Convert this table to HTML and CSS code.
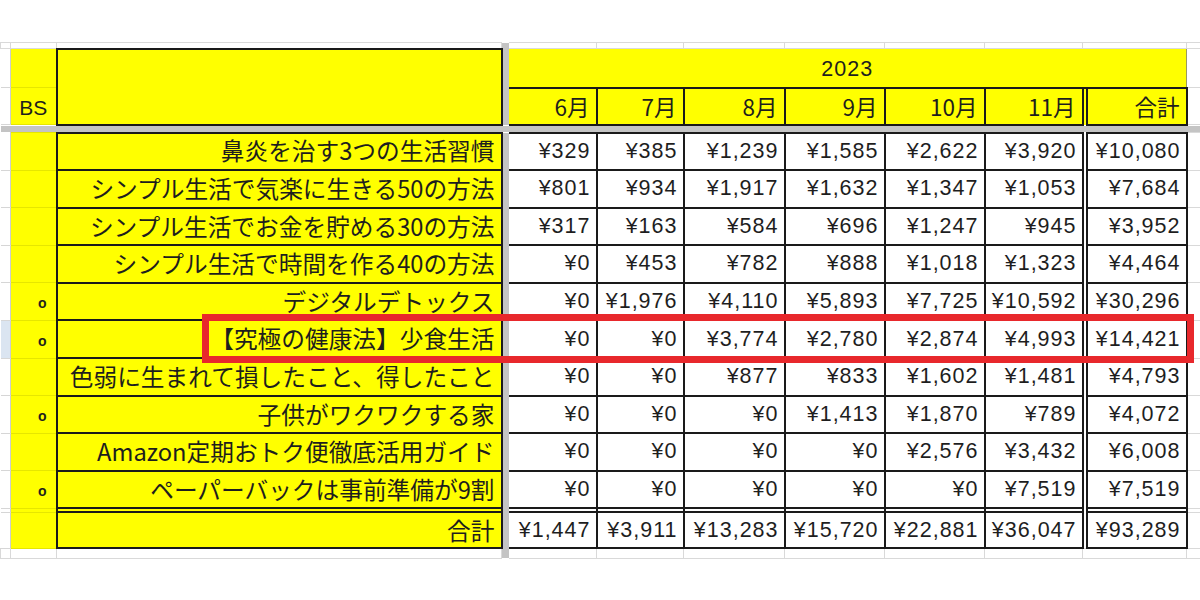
FILE: index.html
```html
<!DOCTYPE html>
<html lang="ja">
<head>
<meta charset="utf-8">
<title>2023 売上表</title>
<link rel="stylesheet" href="styles.css">
</head>
<body>
<div class="sheet">
<table class="grid">
<colgroup>
<col class="w-rh"><col class="w-a"><col class="w-b"><col class="w-fz"><col class="w-6"><col class="w-7"><col class="w-8"><col class="w-9"><col class="w-10"><col class="w-11"><col class="w-sp"><col class="w-tot"><col class="w-rest">
</colgroup>
<tr class="r-top">
<td class="g"></td><td class="g"></td><td class="g"></td><td class="fz"></td><td class="g"></td><td class="g"></td><td class="g"></td><td class="g"></td><td class="g"></td><td class="g"></td><td class="g sp-strip"></td><td class="g"></td><td class="g rest"></td>
</tr>
<tr class="r-h1">
<td class="rh"></td><td class="ya"></td><td class="yb yb-head" rowspan="2"></td><td class="fz"></td><td class="year" colspan="8">2023</td><td class="g rest"></td>
</tr>
<tr class="r-h2">
<td class="rh"></td><td class="ya bs">BS</td><td class="fz"></td><td class="m">6月</td><td class="m">7月</td><td class="m">8月</td><td class="m">9月</td><td class="m">10月</td><td class="m">11月</td><td class="sp sp-y"></td><td class="m">合計</td><td class="g rest"></td>
</tr>
<tr class="r-freeze"><td class="fzr" colspan="13"></td></tr>
<tr class="r-d">
<td class="rh"></td><td class="ya"></td><td class="yb">鼻炎を治す3つの生活習慣</td><td class="fz"></td><td class="d">¥329</td><td class="d">¥385</td><td class="d">¥1,239</td><td class="d">¥1,585</td><td class="d">¥2,622</td><td class="d">¥3,920</td><td class="sp"></td><td class="d">¥10,080</td><td class="g rest"></td>
</tr>
<tr class="r-d">
<td class="rh"></td><td class="ya"></td><td class="yb">シンプル生活で気楽に生きる50の方法</td><td class="fz"></td><td class="d">¥801</td><td class="d">¥934</td><td class="d">¥1,917</td><td class="d">¥1,632</td><td class="d">¥1,347</td><td class="d">¥1,053</td><td class="sp"></td><td class="d">¥7,684</td><td class="g rest"></td>
</tr>
<tr class="r-d">
<td class="rh"></td><td class="ya"></td><td class="yb">シンプル生活でお金を貯める30の方法</td><td class="fz"></td><td class="d">¥317</td><td class="d">¥163</td><td class="d">¥584</td><td class="d">¥696</td><td class="d">¥1,247</td><td class="d">¥945</td><td class="sp"></td><td class="d">¥3,952</td><td class="g rest"></td>
</tr>
<tr class="r-d">
<td class="rh"></td><td class="ya"></td><td class="yb">シンプル生活で時間を作る40の方法</td><td class="fz"></td><td class="d">¥0</td><td class="d">¥453</td><td class="d">¥782</td><td class="d">¥888</td><td class="d">¥1,018</td><td class="d">¥1,323</td><td class="sp"></td><td class="d">¥4,464</td><td class="g rest"></td>
</tr>
<tr class="r-d">
<td class="rh"></td><td class="ya mk">o</td><td class="yb">デジタルデトックス</td><td class="fz"></td><td class="d">¥0</td><td class="d">¥1,976</td><td class="d">¥4,110</td><td class="d">¥5,893</td><td class="d">¥7,725</td><td class="d">¥10,592</td><td class="sp"></td><td class="d">¥30,296</td><td class="g rest"></td>
</tr>
<tr class="r-d">
<td class="rh sel"></td><td class="ya mk">o</td><td class="yb">【究極の健康法】少食生活</td><td class="fz"></td><td class="d">¥0</td><td class="d">¥0</td><td class="d">¥3,774</td><td class="d">¥2,780</td><td class="d">¥2,874</td><td class="d">¥4,993</td><td class="sp"></td><td class="d">¥14,421</td><td class="g rest"></td>
</tr>
<tr class="r-d">
<td class="rh"></td><td class="ya"></td><td class="yb">色弱に生まれて損したこと、得したこと</td><td class="fz"></td><td class="d">¥0</td><td class="d">¥0</td><td class="d">¥877</td><td class="d">¥833</td><td class="d">¥1,602</td><td class="d">¥1,481</td><td class="sp"></td><td class="d">¥4,793</td><td class="g rest"></td>
</tr>
<tr class="r-d">
<td class="rh"></td><td class="ya mk">o</td><td class="yb">子供がワクワクする家</td><td class="fz"></td><td class="d">¥0</td><td class="d">¥0</td><td class="d">¥0</td><td class="d">¥1,413</td><td class="d">¥1,870</td><td class="d">¥789</td><td class="sp"></td><td class="d">¥4,072</td><td class="g rest"></td>
</tr>
<tr class="r-d">
<td class="rh"></td><td class="ya"></td><td class="yb">Amazon定期おトク便徹底活用ガイド</td><td class="fz"></td><td class="d">¥0</td><td class="d">¥0</td><td class="d">¥0</td><td class="d">¥0</td><td class="d">¥2,576</td><td class="d">¥3,432</td><td class="sp"></td><td class="d">¥6,008</td><td class="g rest"></td>
</tr>
<tr class="r-d">
<td class="rh"></td><td class="ya mk">o</td><td class="yb">ペーパーバックは事前準備が9割</td><td class="fz"></td><td class="d">¥0</td><td class="d">¥0</td><td class="d">¥0</td><td class="d">¥0</td><td class="d">¥0</td><td class="d">¥7,519</td><td class="sp"></td><td class="d">¥7,519</td><td class="g rest"></td>
</tr>
<tr class="r-gap">
<td class="rh"></td><td class="ya"></td><td class="yb gapc"></td><td class="fz"></td><td class="d gapc"></td><td class="d gapc"></td><td class="d gapc"></td><td class="d gapc"></td><td class="d gapc"></td><td class="d gapc"></td><td class="sp"></td><td class="d gapc"></td><td class="g rest"></td>
</tr>
<tr class="r-tot">
<td class="rh"></td><td class="ya"></td><td class="yb">合計</td><td class="fz"></td><td class="d">¥1,447</td><td class="d">¥3,911</td><td class="d">¥13,283</td><td class="d">¥15,720</td><td class="d">¥22,881</td><td class="d">¥36,047</td><td class="sp"></td><td class="d">¥93,289</td><td class="g rest"></td>
</tr>
<tr class="r-bot">
<td class="g"></td><td class="g"></td><td class="g"></td><td class="fz"></td><td class="g"></td><td class="g"></td><td class="g"></td><td class="g"></td><td class="g"></td><td class="g"></td><td class="g sp-strip"></td><td class="g"></td><td class="g rest"></td>
</tr>
</table>
<div class="hl"></div>
</div>
</body>
</html>
```

FILE: styles.css
```css
* { box-sizing: border-box; }
html, body { margin: 0; background: #fff; }
body {
  width: 1200px;
  height: 600px;
  overflow: hidden;
  font-family: "Noto Sans CJK JP", "Liberation Sans", sans-serif;
  color: #1e1e1e;
}
.sheet { position: relative; padding-top: 42px; }

.grid {
  border-collapse: collapse;
  table-layout: fixed;
  width: 1200px;
}
.grid td {
  padding: 0 6px;
  white-space: nowrap;
  overflow: hidden;
  border: none;
  line-height: 1;
  vertical-align: middle;
}

.w-rh { width: 10px; }
.w-a { width: 46px; }
.w-b { width: 445px; }
.w-fz { width: 7px; }
.w-6 { width: 88px; }
.w-7 { width: 87px; }
.w-8 { width: 101px; }
.w-9 { width: 100px; }
.w-10 { width: 100px; }
.w-11 { width: 98px; }
.w-sp { width: 4px; }
.w-tot { width: 100px; }
.w-rest { width: 14px; }

.r-top { height: 6px; }
.r-h1 { height: 39px; }
.r-h2 { height: 37px; }
.r-freeze { height: 8px; }
.r-d { height: 37.6px; }
.r-gap { height: 4px; }
.r-tot { height: 36px; }
.r-bot { height: 10px; }

.r-top td { border-top: hidden; }
.r-bot td { border-bottom: hidden; }
.grid td:first-child { border-left: hidden; padding: 0; }
.grid td.rest { border-right: hidden; padding: 0; }

/* plain gridline cells */
.grid td.g {
  background: #fff;
  border: 1px solid #d9d9d9;
  padding: 0;
}
.grid td.sp-strip { border-right: hidden; }

/* row header sliver */
.grid td.rh {
  background: #fff;
  border-bottom: 1px solid #d6d6d6;
  border-right: 1px solid #cdcdcd;
}
.grid td.rh.sel { background: #dbe5f1; }

/* column A (BS) */
.grid td.ya {
  background: #ffff00;
  border-top: 1px solid #e6e600;
  border-bottom: 1px solid #e6e600;
  text-align: right;
}
.grid td.bs {
  text-align: center;
  font-family: "Liberation Sans", sans-serif;
  font-size: 21px;
  padding: 2px 0 0;
}
.grid td.mk {
  font-family: "Liberation Sans", sans-serif;
  font-weight: bold;
  font-size: 14px;
  padding: 3px 9px 0 0;
}

/* column B labels */
.grid td.yb {
  background: #ffff00;
  border: 2px solid #1a1a1a;
  text-align: right;
  font-size: 23.7px;
  padding-right: 6px;
}
.grid td.yb-head { border-top: 2px solid #1a1a1a; }

/* freeze panes */
.grid td.fz {
  background: #c4c4c4;
  border-left: none;
  border-right: hidden;
  padding: 0;
}
.grid td.fzr {
  background: #c4c4c4;
  padding: 0;
  border-left: hidden;
  border-right: hidden;
}

/* header */
.grid td.year {
  background: #ffff00;
  border-top: 1px solid #d4d4b0;
  border-right: 1px solid #9a9a60;
  border-bottom: 2px solid #1a1a1a;
  text-align: center;
  font-family: "Liberation Sans", sans-serif;
  font-size: 21.5px;
  letter-spacing: 1px;
  padding-top: 4px;
}
.grid td.m {
  background: #ffff00;
  border: 2px solid #1a1a1a;
  text-align: right;
  font-size: 22.5px;
  padding-right: 6px;
}

/* data */
.grid td.d {
  background: #fff;
  border: 2px solid #1a1a1a;
  text-align: right;
  font-family: "Liberation Sans", sans-serif;
  font-size: 21.5px;
  letter-spacing: 1px;
  padding-right: 5px;
}
.grid td.sp { background: #fff; padding: 0; }
.grid td.sp-y { background: #ffff00; }
.grid td.gapc { border-top: none; border-bottom: none; }

/* highlight box */
.hl {
  position: absolute;
  left: 202px;
  top: 314px;
  width: 992px;
  height: 49px;
  border: 7px solid #e8282c;
}
```
